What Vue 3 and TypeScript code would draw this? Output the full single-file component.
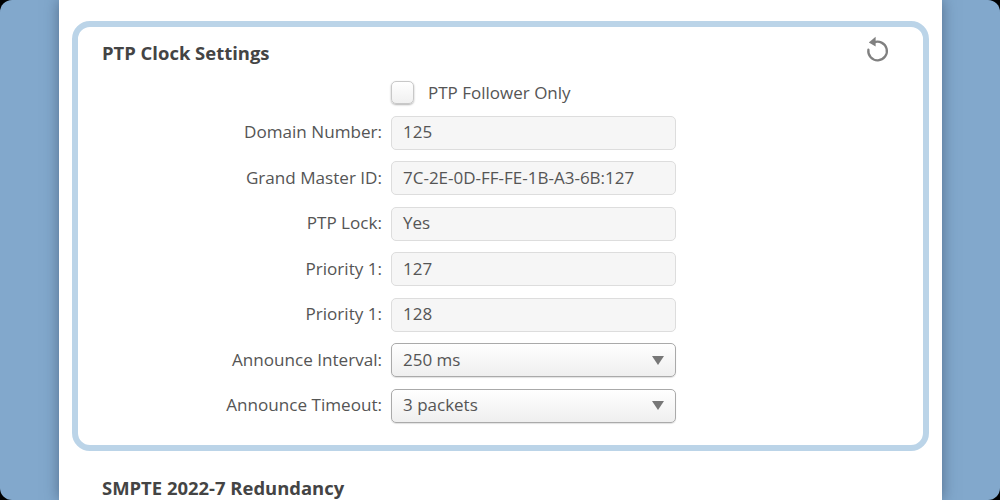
<script setup lang="ts">
interface Row {
  label: string
  value: string
  select?: boolean
}

const rows: Row[] = [
  { label: 'Domain Number:', value: '125' },
  { label: 'Grand Master ID:', value: '7C-2E-0D-FF-FE-1B-A3-6B:127' },
  { label: 'PTP Lock:', value: 'Yes' },
  { label: 'Priority 1:', value: '127' },
  { label: 'Priority 1:', value: '128' },
  { label: 'Announce Interval:', value: '250 ms', select: true },
  { label: 'Announce Timeout:', value: '3 packets', select: true }
]
</script>

<template>
  <div class="screen">
    <div class="panel">
      <section class="card">
        <div class="card-head">
          <h2 class="title">PTP Clock Settings</h2>
          <svg class="reset" width="28" height="28" viewBox="0 0 28 28" fill="none">
            <path d="M10.6 7.6A9.3 9.3 0 1 1 5.4 14.6" stroke="#808080" stroke-width="2.3" stroke-linecap="round" />
            <path d="M12.6 1.8L5.8 7.4L12.6 11.6Z" fill="#808080" />
          </svg>
        </div>
        <div class="form">
          <div class="check-row">
            <span class="checkbox"></span>
            <span class="check-label">PTP Follower Only</span>
          </div>
          <div v-for="(row, i) in rows" :key="i" class="row">
            <span class="label">{{ row.label }}</span>
            <div class="field" :class="{ select: row.select }">
              <span class="value">{{ row.value }}</span>
              <span v-if="row.select" class="arrow"></span>
            </div>
          </div>
        </div>
      </section>
      <h2 class="title next">SMPTE 2022-7 Redundancy</h2>
    </div>
  </div>
</template>

<style>
html, body { margin: 0; background: #000; }
</style>

<style scoped>
.screen {
  width: 1000px;
  height: 500px;
  box-sizing: border-box;
  padding: 0 58px 0 59px;
  background: #82a8cc;
  border-radius: 12px;
  overflow: hidden;
  font-family: "Open Sans", sans-serif;
  color: #4a4a4a;
}
.panel {
  height: 500px;
  box-sizing: border-box;
  padding: 21px 13px 0;
  background: #fff;
  box-shadow: 0 0 14px rgba(40, 60, 85, 0.55);
}
.card {
  height: 430px;
  box-sizing: border-box;
  padding: 14px 24px 0;
  border: 6px solid #bbd4e8;
  border-radius: 18px;
}
.card-head {
  display: flex;
  justify-content: space-between;
  align-items: flex-start;
  height: 40px;
}
.title {
  margin: 0;
  font-size: 18.45px;
  line-height: 24px;
  font-weight: 700;
  color: #444;
}
.reset { margin: -6px 8px 0 0; }
.form {
  display: flex;
  flex-direction: column;
  gap: 11.5px;
}
.check-row {
  display: flex;
  align-items: center;
  height: 24px;
  margin-left: 289px;
  margin-bottom: -1px;
}
.checkbox {
  width: 23px;
  height: 23px;
  box-sizing: border-box;
  margin-top: -2px;
  border: 1px solid #c8c8c8;
  border-radius: 5px;
  background: linear-gradient(#fff, #f0f0f0);
  box-shadow: 0 1px 2px rgba(0, 0, 0, 0.3);
}
.check-label {
  margin: -2px 0 0 14px;
  font-size: 17px;
  color: #555;
}
.row {
  display: flex;
  align-items: center;
  height: 34px;
}
.label {
  width: 280px;
  margin-top: -2px;
  text-align: right;
  font-size: 17.1px;
  color: #555;
}
.field {
  width: 285px;
  height: 34px;
  box-sizing: border-box;
  margin-left: 9px;
  padding: 0 10px 0 11px;
  display: flex;
  align-items: center;
  justify-content: space-between;
  border: 1px solid #dddddd;
  border-radius: 5px;
  background: #f6f6f6;
  font-size: 17px;
  color: #555;
}
.value { margin-top: -2px; }
.select {
  border-color: #aaaaaa;
  background: linear-gradient(#fff, #efefef);
  box-shadow: 0 1px 1px rgba(0, 0, 0, 0.12);
}
.arrow {
  width: 0;
  height: 0;
  margin-right: 1px;
  border-left: 6.5px solid transparent;
  border-right: 6.5px solid transparent;
  border-top: 9px solid #777;
}
.next { margin: 25px 0 0 30px; }
</style>
